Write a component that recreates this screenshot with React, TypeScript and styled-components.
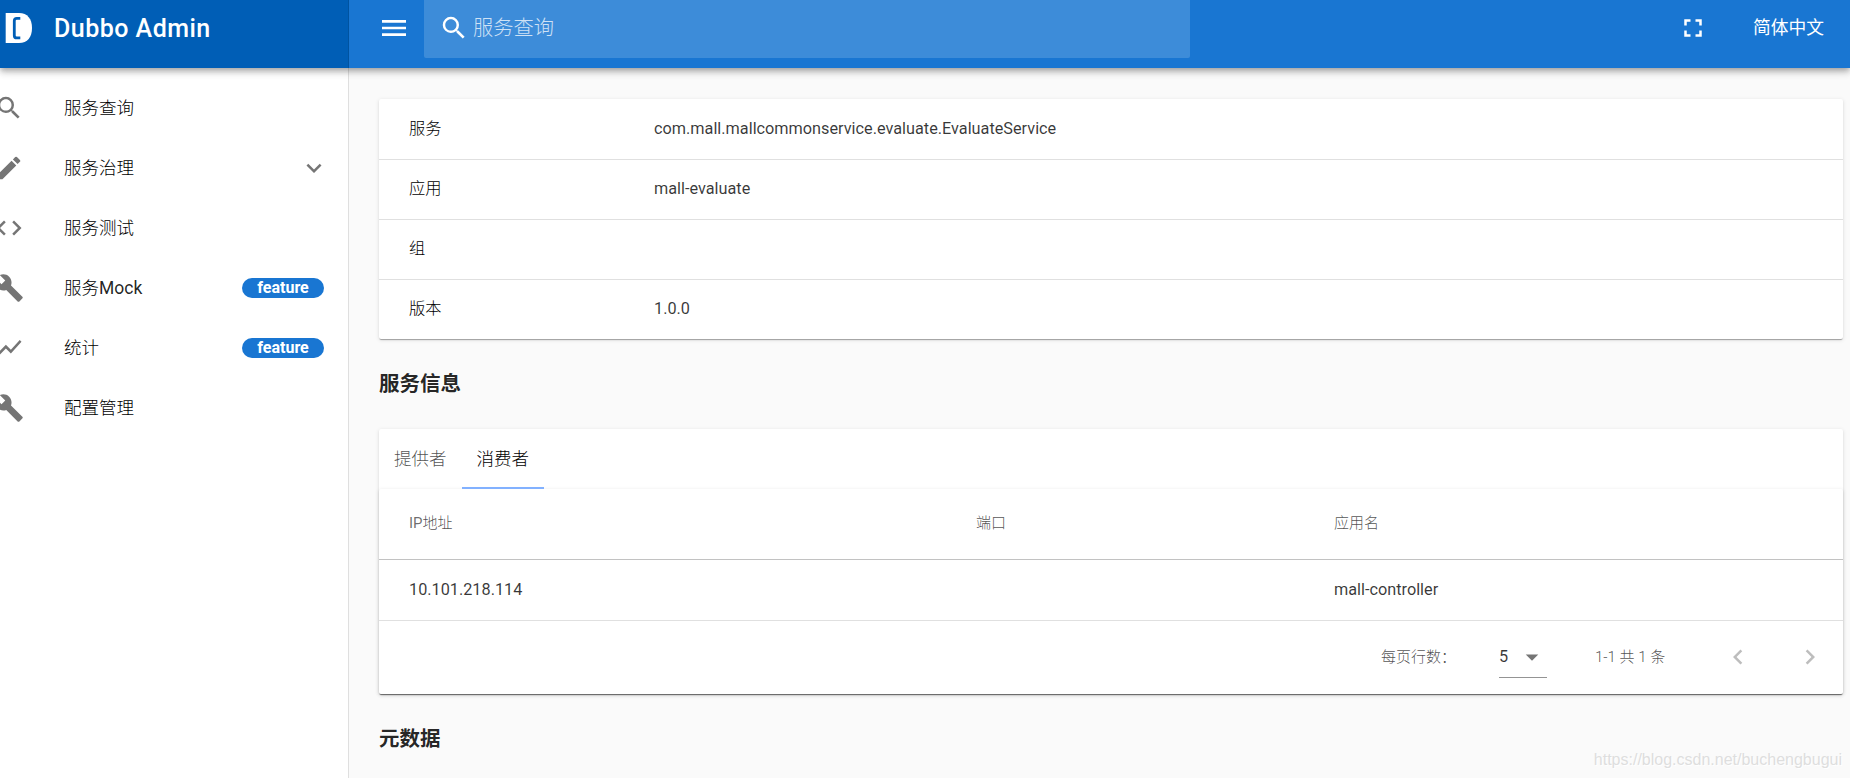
import React from "react";
import styled, { createGlobalStyle, css } from "styled-components";
import {
  MdArrowDropDown,
  MdBuild,
  MdChevronLeft,
  MdChevronRight,
  MdCode,
  MdEdit,
  MdExpandMore,
  MdFullscreen,
  MdMenu,
  MdSearch,
  MdShowChart,
} from "react-icons/md";

const GlobalStyle = createGlobalStyle`
  *, *::before, *::after { box-sizing: border-box; }
  body {
    margin: 0;
    overflow: hidden;
    background: #fafafa;
    color: rgba(0, 0, 0, 0.87);
    font-family: Roboto, "Noto Sans CJK SC", sans-serif;
    font-size: 17.5px;
    line-height: 26px;
  }
`;

const Page = styled.div`
  display: flex;
  flex-direction: column;
  height: 778px;
  overflow: hidden;
`;

const Header = styled.header`
  position: relative;
  z-index: 2;
  display: flex;
  flex: none;
  height: 68px;
  color: #fff;
  background: #1976d2;
  box-shadow: 0 2.5px 5px -1px rgba(0, 0, 0, 0.2), 0 5px 6px 0 rgba(0, 0, 0, 0.14),
    0 1px 12px 0 rgba(0, 0, 0, 0.12);
`;

const Brand = styled.div`
  display: flex;
  align-items: center;
  width: 349px;
  height: 100%;
  padding: 0 0 12px 5px;
  background: #005eb6;
  border-right: 1px solid #0053a0;
`;

const BrandName = styled.span`
  margin: 2px 0 0 21px;
  font-size: 25px;
  font-weight: 500;
  letter-spacing: 0.48px;
  line-height: 30px;
`;

const Toolbar = styled.div`
  display: flex;
  flex: 1;
  align-items: center;
  height: 56px;
  padding: 0 26px 0 29px;
  svg { flex: none; }
`;

const SearchField = styled.div`
  display: flex;
  align-items: center;
  align-self: flex-start;
  width: 766px;
  height: 58px;
  margin-left: 14px;
  padding: 0 15px 2px;
  border-radius: 0 0 2px 2px;
  background: rgba(255, 255, 255, 0.16);
`;

const Placeholder = styled.span`
  margin-left: 4px;
  color: rgba(255, 255, 255, 0.75);
  font-size: 20.25px;
  font-weight: 300;
`;

const FullscreenButton = styled.span`
  display: flex;
  margin-left: auto;
`;

const Language = styled.span`
  margin-left: 45px;
  font-size: 17.75px;
  font-weight: 400;
`;

const Body = styled.div`
  display: flex;
  flex: 1;
  min-height: 0;
`;

const Sidebar = styled.nav`
  flex: none;
  width: 349px;
  padding-top: 10px;
  overflow: hidden;
  background: #fff;
  border-right: 1px solid #dfdfdf;
`;

const NavItem = styled.div`
  display: flex;
  align-items: center;
  height: 60px;
  padding-right: 24px;
  svg { flex: none; color: #757575; }
`;

const NavIcon = styled.span`
  display: flex;
  flex: none;
  width: 70px;
  margin-left: -6px;
`;

const NavLabel = styled.span`
  flex: 1;
  line-height: 30px;
`;

const Han = styled.span<{ $strong?: boolean }>`
  font-weight: 300;
  ${({ $strong }) => $strong && css`color: #000;`}
`;

const Expand = styled.span`
  display: flex;
  margin-right: -5px;
`;

const Pill = styled.span`
  width: 82px;
  height: 20px;
  border-radius: 10px;
  color: #fff;
  background: #1976d2;
  font-size: 16px;
  font-weight: 700;
  line-height: 19px;
  text-align: center;
`;

const Main = styled.main`
  flex: 1;
  padding: 31px 7px 0 30px;
`;

const Card = styled.section`
  background: #fff;
  border-radius: 2px;
  box-shadow: 0 2px 1px -1px rgba(0, 0, 0, 0.2), 0 1px 1px 0 rgba(0, 0, 0, 0.14),
    0 1px 4px 0 rgba(0, 0, 0, 0.12);
`;

const DetailRow = styled.div`
  display: flex;
  align-items: center;
  height: 60px;
  padding: 0 30px 1px;
  color: rgba(0, 0, 0, 0.78);
  font-size: 16.25px;
  & + & { border-top: 1px solid #e0e0e0; padding-bottom: 2px; }
`;

const DetailLabel = styled.span`
  width: 245px;
  color: #000;
  font-weight: 300;
`;

const Heading = styled.h3`
  margin: 0;
  font-size: 20.5px;
  font-weight: 700;
  line-height: 90px;
`;

const Tabs = styled.div`
  display: flex;
  height: 60px;
`;

const Tab = styled.div<{ $active?: boolean }>`
  display: flex;
  align-items: center;
  padding: 2px 15px 0;
  color: rgba(0, 0, 0, 0.7);
  font-weight: 300;
  border-bottom: 2px solid transparent;
  ${({ $active }) =>
    $active &&
    css`
      color: #000;
      border-bottom-color: #82b1ff;
    `}
`;

const TableCard = styled(Card)`
  height: 205px;
`;

const TableRow = styled.div<{ $head?: boolean }>`
  display: grid;
  grid-template-columns: 567px 358px 1fr;
  align-items: center;
  height: 61px;
  padding: 0 0 1px 30px;
  color: rgba(0, 0, 0, 0.78);
  border-bottom: 1px solid #e0e0e0;
  font-size: 16.25px;
  ${({ $head }) =>
    $head &&
    css`
      height: 71px;
      padding-bottom: 2px;
      color: rgba(0, 0, 0, 0.58);
      border-bottom-color: #c2c2c2;
      font-size: 15px;
      ${Han} { color: rgba(0, 0, 0, 0.7); }
    `}
`;

const Footer = styled.div`
  display: flex;
  align-items: center;
  justify-content: flex-end;
  height: 73px;
  padding: 0 18px 1px 0;
  color: rgba(0, 0, 0, 0.7);
  font-size: 15px;
`;

const PageSize = styled.span`
  display: flex;
  align-items: center;
  justify-content: space-between;
  width: 48px;
  height: 42px;
  margin: 0 48px 0 43px;
  color: rgba(0, 0, 0, 0.78);
  border-bottom: 1px solid #949494;
  font-size: 16.25px;
  svg { color: #757575; }
`;

const Range = styled.span`
  width: 128px;
  font-weight: 300;
`;

const Pager = styled.span`
  display: flex;
  gap: 42px;
  color: #bdbdbd;
`;

const Watermark = styled.div`
  position: absolute;
  right: 8px;
  bottom: 8px;
  color: #dedede;
  font-family: "Liberation Sans", sans-serif;
  font-size: 16px;
  line-height: 20px;
  text-shadow: 1px 1px 0 #fff;
`;

const BrandMark = () => (
  <svg width="28" height="30" viewBox="0 0 28 30">
    <path d="M.7 0H14c8.500 0 13 6 13 15s-4.500 15-13 15H.7z" fill="#fff" />
    <path
      d="M15.300 5.300h-3.500q-2.500 0-2.500 2.500v14.600q0 2.500 2.500 2.500h3.500"
      fill="none"
      stroke="#005eb6"
      strokeWidth="2.800"
    />
  </svg>
);

const navItems = [
  { icon: MdSearch, han: "服务查询" },
  { icon: MdEdit, han: "服务治理", expandable: true },
  { icon: MdCode, han: "服务测试" },
  { icon: MdBuild, han: "服务", latin: "Mock", badge: "feature" },
  { icon: MdShowChart, han: "统计", badge: "feature" },
  { icon: MdBuild, han: "配置管理" },
];

const details = [
  ["服务", "com.mall.mallcommonservice.evaluate.EvaluateService"],
  ["应用", "mall-evaluate"],
  ["组", ""],
  ["版本", "1.0.0"],
];

export default function App() {
  return (
    <Page>
      <GlobalStyle />
      <Header>
        <Brand>
          <BrandMark />
          <BrandName>Dubbo Admin</BrandName>
        </Brand>
        <Toolbar>
          <MdMenu size={32} />
          <SearchField>
            <MdSearch size={30} />
            <Placeholder>服务查询</Placeholder>
          </SearchField>
          <FullscreenButton>
            <MdFullscreen size={30} />
          </FullscreenButton>
          <Language>简体中文</Language>
        </Toolbar>
      </Header>
      <Body>
        <Sidebar>
          {navItems.map(({ icon: Icon, han, latin, badge, expandable }) => (
            <NavItem key={han + (latin ?? "")}>
              <NavIcon>
                <Icon size={30} />
              </NavIcon>
              <NavLabel>
                <Han $strong>{han}</Han>
                {latin}
              </NavLabel>
              {badge && <Pill>{badge}</Pill>}
              {expandable && (
                <Expand>
                  <MdExpandMore size={30} />
                </Expand>
              )}
            </NavItem>
          ))}
        </Sidebar>
        <Main>
          <Card>
            {details.map(([label, value]) => (
              <DetailRow key={label}>
                <DetailLabel>{label}</DetailLabel>
                <span>{value}</span>
              </DetailRow>
            ))}
          </Card>
          <Heading>服务信息</Heading>
          <Card>
            <Tabs>
              <Tab>提供者</Tab>
              <Tab $active>消费者</Tab>
            </Tabs>
            <TableCard>
              <TableRow $head>
                <span>
                  IP<Han>地址</Han>
                </span>
                <Han>端口</Han>
                <Han>应用名</Han>
              </TableRow>
              <TableRow>
                <span>10.101.218.114</span>
                <span />
                <span>mall-controller</span>
              </TableRow>
              <Footer>
                <Han>每页行数：</Han>
                <PageSize>
                  5
                  <MdArrowDropDown size={30} />
                </PageSize>
                <Range>1-1 共 1 条</Range>
                <Pager>
                  <MdChevronLeft size={30} />
                  <MdChevronRight size={30} />
                </Pager>
              </Footer>
            </TableCard>
          </Card>
          <Heading>元数据</Heading>
        </Main>
      </Body>
      <Watermark>https://blog.csdn.net/buchengbugui</Watermark>
    </Page>
  );
}
